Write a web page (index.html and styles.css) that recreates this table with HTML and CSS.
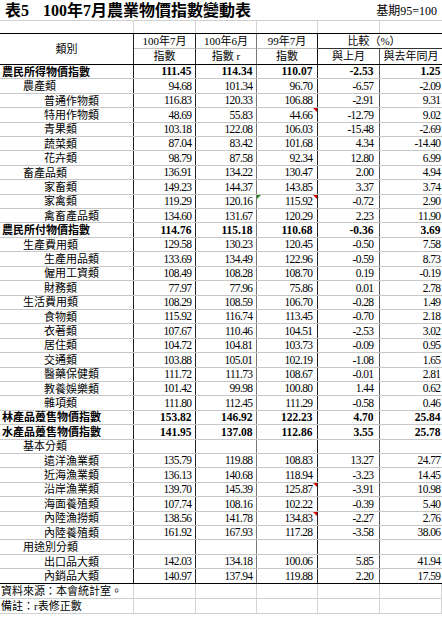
FILE: index.html
```html
<!DOCTYPE html>
<html lang="zh-Hant">
<head>
<meta charset="utf-8">
<title>表5 100年7月農業物價指數變動表</title>
<link rel="stylesheet" href="styles.css">
</head>
<body>
<div class="sheet">
  <div class="title-row">
    <div class="title"><span class="no">表5</span>100年7月農業物價指數變動表</div>
    <div class="base">基期95=100</div>
  </div>
  <div class="row blank"><div></div><div></div><div></div><div></div><div></div><div></div></div>
  <div class="head">
    <div class="h-cat">類別</div>
    <div class="h-a">100年7月</div>
    <div class="h-a">100年6月</div>
    <div class="h-a">99年7月</div>
    <div class="h-cmp">比較（%）</div>
    <div class="h-b">指數</div>
    <div class="h-b">指數 r</div>
    <div class="h-b">指數</div>
    <div class="h-b">與上月</div>
    <div class="h-b last">與去年同月</div>
  </div>

  <div class="row data b"><div class="n l0">農民所得物價指數</div><div>111.45</div><div>114.34</div><div>110.07</div><div>-2.53</div><div>1.25</div></div>
  <div class="row data"><div class="n l1">農產類</div><div>94.68</div><div>101.34</div><div>96.70</div><div>-6.57</div><div>-2.09</div></div>
  <div class="row data"><div class="n l2">普通作物類</div><div>116.83</div><div>120.33</div><div>106.88</div><div>-2.91</div><div>9.31</div></div>
  <div class="row data"><div class="n l2">特用作物類</div><div>48.69</div><div>55.83</div><div>44.66<span class="tri-red"></span></div><div>-12.79</div><div>9.02</div></div>
  <div class="row data"><div class="n l2">青果類</div><div>103.18</div><div>122.08</div><div>106.03</div><div>-15.48</div><div>-2.69</div></div>
  <div class="row data"><div class="n l2">蔬菜類</div><div>87.04</div><div>83.42</div><div>101.68</div><div>4.34</div><div>-14.40</div></div>
  <div class="row data"><div class="n l2">花卉類</div><div>98.79</div><div>87.58</div><div>92.34</div><div>12.80</div><div>6.99</div></div>
  <div class="row data"><div class="n l1">畜產品類</div><div>136.91</div><div>134.22</div><div>130.47</div><div>2.00</div><div>4.94</div></div>
  <div class="row data"><div class="n l2">家畜類</div><div>149.23</div><div>144.37</div><div>143.85</div><div>3.37</div><div>3.74</div></div>
  <div class="row data"><div class="n l2">家禽類</div><div>119.29</div><div>120.16</div><div>115.92<span class="tri-green"></span><span class="tri-red"></span></div><div>-0.72</div><div>2.90</div></div>
  <div class="row data"><div class="n l2">禽畜產品類</div><div>134.60</div><div>131.67</div><div>120.29</div><div>2.23</div><div>11.90</div></div>
  <div class="row data b"><div class="n l0">農民所付物價指數</div><div>114.76</div><div>115.18</div><div>110.68</div><div>-0.36</div><div>3.69</div></div>
  <div class="row data"><div class="n l1">生產費用類</div><div>129.58</div><div>130.23</div><div>120.45</div><div>-0.50</div><div>7.58</div></div>
  <div class="row data"><div class="n l2">生產用品類</div><div>133.69</div><div>134.49</div><div>122.96</div><div>-0.59</div><div>8.73</div></div>
  <div class="row data"><div class="n l2">僱用工資類</div><div>108.49</div><div>108.28</div><div>108.70</div><div>0.19</div><div>-0.19</div></div>
  <div class="row data"><div class="n l2">財務類</div><div>77.97</div><div>77.96</div><div>75.86</div><div>0.01</div><div>2.78</div></div>
  <div class="row data"><div class="n l1">生活費用類</div><div>108.29</div><div>108.59</div><div>106.70</div><div>-0.28</div><div>1.49</div></div>
  <div class="row data"><div class="n l2">食物類</div><div>115.92</div><div>116.74</div><div>113.45</div><div>-0.70</div><div>2.18</div></div>
  <div class="row data"><div class="n l2">衣著類</div><div>107.67</div><div>110.46</div><div>104.51</div><div>-2.53</div><div>3.02</div></div>
  <div class="row data"><div class="n l2">居住類</div><div>104.72</div><div>104.81</div><div>103.73</div><div>-0.09</div><div>0.95</div></div>
  <div class="row data"><div class="n l2">交通類</div><div>103.88</div><div>105.01</div><div>102.19</div><div>-1.08</div><div>1.65</div></div>
  <div class="row data"><div class="n l2">醫藥保健類</div><div>111.72</div><div>111.73</div><div>108.67</div><div>-0.01</div><div>2.81</div></div>
  <div class="row data"><div class="n l2">教養娛樂類</div><div>101.42</div><div>99.98</div><div>100.80</div><div>1.44</div><div>0.62</div></div>
  <div class="row data"><div class="n l2">雜項類</div><div>111.80</div><div>112.45</div><div>111.29</div><div>-0.58</div><div>0.46</div></div>
  <div class="row data b"><div class="n l0">林產品躉售物價指數</div><div>153.82</div><div>146.92</div><div>122.23</div><div>4.70</div><div>25.84</div></div>
  <div class="row data b"><div class="n l0">水產品躉售物價指數</div><div>141.95</div><div>137.08</div><div>112.86</div><div>3.55</div><div>25.78</div></div>
  <div class="row data"><div class="n l1">基本分類</div><div></div><div></div><div></div><div></div><div></div></div>
  <div class="row data"><div class="n l2">遠洋漁業類</div><div>135.79</div><div>119.88</div><div>108.83</div><div>13.27</div><div>24.77</div></div>
  <div class="row data"><div class="n l2">近海漁業類</div><div>136.13</div><div>140.68</div><div>118.94</div><div>-3.23</div><div>14.45</div></div>
  <div class="row data"><div class="n l2">沿岸漁業類</div><div>139.70</div><div>145.39</div><div>125.87<span class="tri-red"></span></div><div>-3.91</div><div>10.98</div></div>
  <div class="row data"><div class="n l2">海面養殖類</div><div>107.74</div><div>108.16</div><div>102.22</div><div>-0.39</div><div>5.40</div></div>
  <div class="row data"><div class="n l2">內陸漁撈類</div><div>138.56</div><div>141.78</div><div>134.83<span class="tri-red"></span></div><div>-2.27</div><div>2.76</div></div>
  <div class="row data"><div class="n l2">內陸養殖類</div><div>161.92</div><div>167.93</div><div>117.28</div><div>-3.58</div><div>38.06</div></div>
  <div class="row data"><div class="n l1">用途別分類</div><div></div><div></div><div></div><div></div><div></div></div>
  <div class="row data"><div class="n l2">出口品大類</div><div>142.03</div><div>134.18</div><div>100.06</div><div>5.85</div><div>41.94</div></div>
  <div class="row data end"><div class="n l2">內銷品大類</div><div>140.97</div><div>137.94</div><div>119.88</div><div>2.20</div><div>17.59</div></div>

  <div class="row foot"><div class="note">資料來源：本會統計室。</div><div></div><div></div><div></div><div></div><div></div></div>
  <div class="row foot"><div class="note">備註：r表修正數</div><div></div><div></div><div></div><div></div><div></div></div>
</div>
</body>
</html>
```

FILE: styles.css
```css
html, body {
  margin: 0;
  padding: 0;
  background: #ffffff;
}

body {
  width: 442px;
  height: 617px;
  overflow: hidden;
  font-family: "Liberation Serif", "Noto Sans CJK TC", serif;
  color: #000;
}

.sheet {
  width: 442px;
}

.title-row {
  height: 21px;
  box-sizing: border-box;
  border-bottom: 1px solid #d0d0d0;
  display: flex;
  justify-content: space-between;
  align-items: center;
  padding: 1px 5px 0 5px;
}

.title {
  font-size: 16px;
  font-weight: bold;
  line-height: 1;
  white-space: nowrap;
}

.title .no {
  margin-right: 14px;
}

.base {
  font-size: 12px;
  line-height: 1;
  white-space: nowrap;
}

.row {
  display: grid;
  grid-template-columns: 134px 62px 61px 61px 62px 62px;
  box-sizing: border-box;
}

.row > div {
  display: flex;
  align-items: center;
  justify-content: flex-end;
  position: relative;
  box-sizing: border-box;
  border-right: 1px solid #222;
  line-height: 1;
  white-space: nowrap;
}

.row > div:nth-child(3) { border-right-color: #777; }
.row > div:nth-child(5) { border-right-color: #555; }
.row > div:nth-child(6) { border-right: none; }

/* empty spacer row above header */
.blank {
  height: 13px;
  border-bottom: 1px solid #000;
}

.blank > div,
.blank > div:nth-child(3),
.blank > div:nth-child(5) {
  border-right-color: #d4d4d4;
}

/* header */
.head {
  display: grid;
  grid-template-columns: 134px 62px 61px 61px 62px 62px;
  grid-template-rows: 15px 15px;
  height: 31px;
  box-sizing: border-box;
  border-bottom: 1px solid #000;
  font-size: 11px;
}

.head > div {
  display: flex;
  align-items: center;
  justify-content: center;
  box-sizing: border-box;
  border-right: 1px solid #222;
  line-height: 1;
  white-space: nowrap;
}

.head .h-cat {
  grid-row: span 2;
  padding-top: 1px;
}

.head .h-a {
  border-bottom: 1px solid #c0c0c0;
}

.head .h-a:nth-child(3) { border-right-color: #777; }
.head .h-a:nth-child(4) { border-right-color: #111; }

.head .h-cmp {
  grid-column: span 2;
  border-bottom: 1px solid #333;
  border-right: none;
  padding-right: 12px;
}

.head .h-b:nth-child(7) { border-right-color: #777; }
.head .h-b:nth-child(8) { border-right-color: #111; }
.head .h-b:nth-child(9) { border-right-color: #555; }
.head .h-b.last {
  border-right: none;
}

/* data rows */
.data {
  height: 14.42px;
  border-bottom: 1px solid #c8c8c8;
}

.data.end {
  border-bottom-color: #000;
}

.data > div {
  font-size: 11.5px;
  letter-spacing: -0.6px;
  padding-top: 1px;
}

.data > div:nth-child(2) { padding-right: 3.5px; }
.data > div:nth-child(3) { padding-right: 3.5px; }
.data > div:nth-child(4) { padding-right: 4.5px; }
.data > div:nth-child(5) { padding-right: 5.5px; }
.data > div:nth-child(6) { padding-right: 1.5px; }

.data.b > div {
  font-weight: bold;
  letter-spacing: 0;
}

.data > div.n {
  justify-content: flex-start;
  font-size: 11px;
  letter-spacing: 0;
}

.n.l0 { padding-left: 2px; }
.n.l1 { padding-left: 23px; }
.n.l2 { padding-left: 44px; }

/* comment / error indicators */
.tri-red {
  position: absolute;
  top: 0;
  right: 0;
  width: 0;
  height: 0;
  border-top: 4px solid #e00000;
  border-left: 4px solid transparent;
}

.tri-green {
  position: absolute;
  top: 0;
  left: 0;
  width: 0;
  height: 0;
  border-top: 4px solid #1a8a1a;
  border-right: 4px solid transparent;
}

/* footer rows */
.foot {
  height: 15px;
  border-bottom: 1px solid #d0d0d0;
}

.foot > div,
.foot > div:nth-child(3),
.foot > div:nth-child(5) {
  border-right-color: #d4d4d4;
}

.foot > div:nth-child(6) {
  border-right: 1px solid #d4d4d4;
}

.foot > div.note {
  justify-content: flex-start;
  font-size: 11px;
  padding-left: 1px;
  padding-top: 1px;
  overflow: visible;
}
```
